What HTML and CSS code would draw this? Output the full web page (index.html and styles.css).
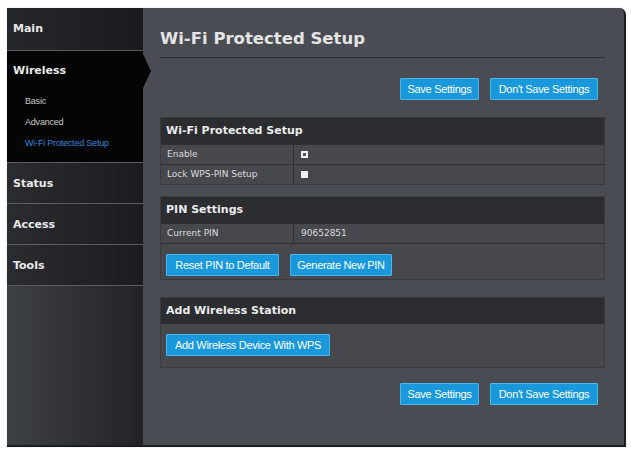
FILE: index.html
```html
<!DOCTYPE html>
<html>
<head>
<meta charset="utf-8">
<link rel="stylesheet" href="styles.css">
</head>
<body>
<div class="frame">
  <nav class="sidebar">
    <div class="nav-item"><span class="nav-label">Main</span></div>
    <div class="nav-item active">
      <span class="nav-label">Wireless</span>
      <ul class="sub">
        <li>Basic</li>
        <li>Advanced</li>
        <li class="current">Wi-Fi Protected Setup</li>
      </ul>
    </div>
    <div class="nav-item"><span class="nav-label">Status</span></div>
    <div class="nav-item"><span class="nav-label">Access</span></div>
    <div class="nav-item"><span class="nav-label">Tools</span></div>
    <div class="nav-rest"></div>
  </nav>
  <main class="main">
    <h1 class="title">Wi-Fi Protected Setup</h1>
    <div class="actions">
      <button class="btn btn-save">Save Settings</button>
      <button class="btn btn-dont">Don't Save Settings</button>
    </div>

    <section class="box box-wps">
      <div class="box-head">Wi-Fi Protected Setup</div>
      <div class="row"><div class="cell-label">Enable</div><div class="cell-value"><span class="chk checked"></span></div></div>
      <div class="row"><div class="cell-label">Lock WPS-PIN Setup</div><div class="cell-value"><span class="chk"></span></div></div>
    </section>

    <section class="box box-pin">
      <div class="box-head">PIN Settings</div>
      <div class="row"><div class="cell-label">Current PIN</div><div class="cell-value">90652851</div></div>
      <div class="btn-row">
        <button class="btn btn-reset">Reset PIN to Default</button>
        <button class="btn btn-gen">Generate New PIN</button>
      </div>
    </section>

    <section class="box box-add">
      <div class="box-head">Add Wireless Station</div>
      <div class="btn-row">
        <button class="btn btn-add">Add Wireless Device With WPS</button>
      </div>
    </section>

    <div class="actions actions-bottom">
      <button class="btn btn-save">Save Settings</button>
      <button class="btn btn-dont">Don't Save Settings</button>
    </div>
  </main>
</div>
</body>
</html>
```
FILE: styles.css
```css
* { box-sizing: border-box; }
html, body { margin: 0; padding: 0; background: #ffffff; }
body { width: 631px; height: 451px; overflow: hidden; font-family: "DejaVu Sans", Verdana, sans-serif; }

.frame {
  margin: 8px 0 0 7px;
  width: 619px;
  height: 439px;
  display: flex;
  background: #4a4c53;
  border-right: 2px solid #1c1d20;
  border-bottom: 2px solid #1c1d20;
  border-top-right-radius: 7px;
  position: relative;
  box-shadow: 0 0 1px rgba(0,0,0,0.4);
}

.sidebar {
  width: 136px;
  flex: none;
  display: flex;
  flex-direction: column;
  background: linear-gradient(to right, #3d4044, #212327);
  position: relative;
  z-index: 2;
}
.nav-item {
  border-bottom: 1px solid #5b5d62;
  background: linear-gradient(to right, #2a2c30, #1b1c1f);
  height: 41px;
  display: flex;
  flex-direction: column;
  justify-content: center;
  padding-left: 6px;
}
.nav-item:first-child { height: 43px; padding-bottom: 2px; background: linear-gradient(to right, #25272a, #1a1b1e); }
.nav-label {
  color: #e9e9e9;
  font-weight: bold;
  font-size: 11px;
}
.nav-item.active {
  height: 112px;
  justify-content: flex-start;
  padding-top: 13px;
  background: #050505;
  position: relative;
}
.nav-item.active::after {
  content: "";
  position: absolute;
  right: -8px;
  top: 3px;
  border-top: 17px solid transparent;
  border-bottom: 17px solid transparent;
  border-left: 8px solid #050505;
}
.sub {
  list-style: none;
  margin: 18px 0 0 0;
  padding: 0 0 0 12px;
  display: flex;
  flex-direction: column;
  gap: 9px;
}
.sub li {
  font-family: "Liberation Sans", Arial, sans-serif;
  font-size: 9px;
  line-height: 12px;
  color: #c8c8c8;
  letter-spacing: -0.2px;
}
.sub li.current { color: #2f86d6; }
.nav-rest { flex: 1; }

.main {
  flex: 1;
  padding: 0 19px 0 17px;
  display: flex;
  flex-direction: column;
}
.title {
  margin: 0;
  height: 50px;
  padding-top: 20px;
  font-size: 16.5px;
  font-weight: bold;
  color: #e4e4e4;
  border-bottom: 1px solid #2e3034;
  line-height: 22px;
}
.actions {
  display: flex;
  justify-content: flex-end;
  gap: 11px;
  margin-top: 20px;
  padding-right: 7px;
}
.actions-bottom { margin-top: 15px; }

.btn {
  height: 22px;
  padding: 0 6px;
  background: #1a98dc;
  border: 1px solid #4db6ea;
  border-radius: 1px;
  color: #ffffff;
  font-family: "Liberation Sans", Arial, sans-serif;
  font-size: 11px;
  letter-spacing: -0.3px;
  cursor: pointer;
}
.btn-save { width: 79px; }
.btn-dont { width: 108px; }
.btn-reset { width: 113px; }
.btn-gen { width: 102px; }
.btn-add { width: 164px; height: 22px; }

.box {
  background: #46484e;
  border: 1px solid #3a3c41;
  margin-top: 17px;
}
.box-pin { margin-top: 11px; }
.box-add { margin-top: 17px; height: 71px; }
.box-head {
  height: 26px;
  background: #2b2d31;
  color: #ececec;
  font-weight: bold;
  font-size: 11px;
  line-height: 26px;
  padding-left: 5px;
}
.row {
  display: flex;
  height: 20px;
  border-top: 1px solid #2f3135;
  font-size: 9px;
  color: #dcdcdc;
  line-height: 19px;
}
.cell-label { width: 133px; padding-left: 6px; border-right: 1px solid #2f3135; }
.cell-value { padding-left: 7px; display: flex; align-items: center; }
.chk {
  width: 7px;
  height: 7px;
  background: #f2f2f2;
  display: inline-block;
  position: relative;
}
.chk.checked::after {
  content: "";
  position: absolute;
  left: 2px;
  top: 2px;
  width: 3px;
  height: 3px;
  background: #555;
}
.btn-row {
  display: flex;
  gap: 11px;
  padding: 10px 0 3px 5px;
  border-top: 1px solid #2f3135;
}
.box-add .btn-row { border-top: none; padding-top: 10px; }
```
